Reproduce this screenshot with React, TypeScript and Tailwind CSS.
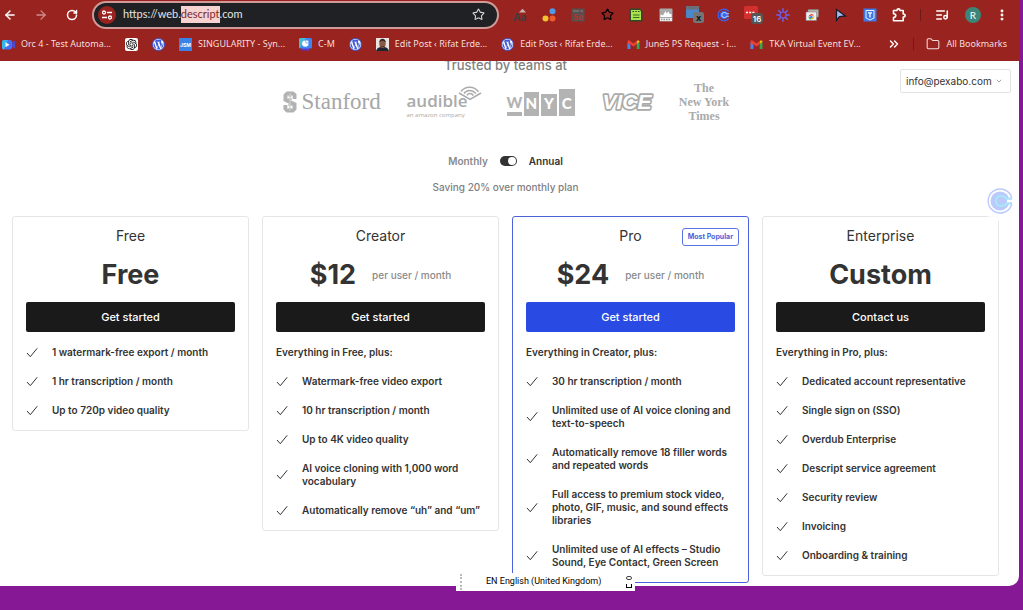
import React, { useEffect, useRef } from "react";
import {
  ArrowLeft,
  ArrowRight,
  ChevronDown,
  ChevronsRight,
  EllipsisVertical,
  Folder,
  ListMusic,
  RotateCw,
  Star,
} from "lucide-react";
import { SiOpenai, SiWordpress } from "react-icons/si";

const URL_TEXT = "https://web.descript.com";

/* ---------- small icons ---------- */

function CheckMark() {
  return (
    <svg viewBox="0 0 12 12" className="w-3 h-3 shrink-0" fill="none" stroke="#333" strokeWidth="1">
      <path d="M1 6 4.300 9.700 11.200 1.300" />
    </svg>
  );
}

function WordpressIcon() {
  return (
    <span className="w-[13px] h-[13px] shrink-0 rounded-full bg-[#3f5bd8] flex items-center justify-center">
      <SiWordpress className="w-[11px] h-[11px] text-white" />
    </span>
  );
}

function GmailIcon() {
  return (
    <svg viewBox="0 0 13 13" className="w-[13px] h-[13px] shrink-0">
      <path d="M12.500 3.500V11H9.700V5.600z" fill="#34a853" />
      <path d="M9.700 3.300 11 2.200q1.500 0 1.500 1.600L9.700 6z" fill="#fbbc04" />
      <path d="M.5 3.800q0-1.800 1.600-1.600L6.500 5.600l3.200-2.500V6L6.500 8.600 3.300 6v5H.9L.5 4z" fill="#ea4335" />
      <path d="M.5 5v6h2.800V7z" fill="#4285f4" />
    </svg>
  );
}

function CameraIcon() {
  return (
    <svg viewBox="0 0 13 13" className="w-[13px] h-[13px] shrink-0">
      <path d="M9 5 13 2.600v8L9 8.500z" fill="#5145c8" />
      <rect x="0" y="2" width="10" height="9.500" rx="2" fill="#4a6ff0" />
      <path d="M0 4q0-2 2-2h4L2 11.500Q0 11.500 0 9.500z" fill="#35b6e8" />
      <path d="M3.500 4.200v5l4-2.500z" fill="#fff" />
    </svg>
  );
}

function JsmIcon() {
  return (
    <svg viewBox="0 0 13 13" className="w-[13px] h-[13px] shrink-0">
      <rect width="13" height="13" fill="#3b82e6" />
      <text x="6.500" y="8.500" textAnchor="middle" fontSize="5" fontWeight="700" fontFamily="Inter, sans-serif" fill="#fff">
        JSM
      </text>
    </svg>
  );
}

function ChartBadgeIcon() {
  return (
    <svg viewBox="0 0 13 13" className="w-[13px] h-[13px] shrink-0">
      <path d="M4 9 2.500 12.700l2-.7L5.500 13 6.500 10 7.500 13l1.200-1 1.800.7L9 9z" fill="#5b3fe0" />
      <rect x="0" y="0" width="13" height="10.500" rx="1.500" fill="#3f86f0" />
      <path d="M0 1.500Q0 0 1.500 0H7L1 10Q0 9.800 0 9z" fill="#48b8d8" />
      <circle cx="6.300" cy="5.600" r="3.200" fill="#fff" />
      <path d="M6.800 5V1.800A3.200 3.200 0 0 1 10 5z" fill="#fff" stroke="#3f86f0" strokeWidth=".6" />
    </svg>
  );
}

function PortraitIcon() {
  return (
    <svg viewBox="0 0 13 13" className="w-[13px] h-[13px] shrink-0">
      <rect width="13" height="13" fill="#e9e4df" />
      <path d="M0 13q1-3.500 4.500-4h4q3.500.5 4.500 4z" fill="#1f2430" />
      <ellipse cx="6.500" cy="5.800" rx="3.200" ry="4.200" fill="#8a5a48" />
      <path d="M3.300 4.500Q3.500.8 6.500.8t3.200 3.700Q8 2.800 6.500 2.800T3.300 4.500z" fill="#3a2a26" />
      <path d="M5 8.200h3v.8H5z" fill="#4c2f28" />
    </svg>
  );
}

/* ---------- toolbar extensions ---------- */

const extensions: { name: string; icon: React.ReactNode }[] = [
  {
    name: "Fonts",
    icon: (
      <svg viewBox="0 0 14 14" className="w-3.5 h-3.5">
        <text x="0" y="12.500" fontSize="10" fontWeight="700" fontFamily="Inter, sans-serif" fill="#453c3c">
          Aa
        </text>
        <path d="M6 4.500 9.500.8 13 4.500z" fill="#c9b3b3" />
      </svg>
    ),
  },
  {
    name: "Dots",
    icon: (
      <svg viewBox="0 0 14 14" className="w-3.5 h-3.5">
        <circle cx="10.500" cy="3.300" r="3" fill="#4f9be8" />
        <circle cx="3.500" cy="10.500" r="3" fill="#f2c230" />
        <circle cx="10.500" cy="10.500" r="3" fill="#ef5a2c" />
      </svg>
    ),
  },
  {
    name: "Search engine",
    icon: (
      <svg viewBox="0 0 14 14" className="w-3.5 h-3.5">
        <rect x=".5" y=".5" width="13" height="13" fill="#57504f" />
        <path d="M2 3h6M9.500 3H12" stroke="#8d8583" strokeWidth="1" />
        <text x="2" y="12" fontSize="8" fontWeight="700" fontFamily="Inter, sans-serif" fill="#b8332d">
          5e
        </text>
      </svg>
    ),
  },
  {
    name: "Favourites",
    icon: <Star className="w-[13px] h-[13px] text-black" strokeWidth={2.2} />,
  },
  {
    name: "Notes",
    icon: (
      <svg viewBox="0 0 14 14" className="w-3.5 h-3.5">
        <path d="M1.500.5h9.500l2.500 2.500v10.500H.5V2q0-1.500 1-1.500z" fill="#2f4a2b" />
        <path d="M2 2h9l1 1.500V12H2z" fill="#a9e24c" />
        <path d="M3.500 3.500H5M6.300 3.500h1.500M9 3.500h1.500" stroke="#28451c" />
        <path d="M4 7h6.500M4 9.500h6.500" stroke="#3b6b25" strokeWidth="1.200" />
      </svg>
    ),
  },
  {
    name: "Thumbs",
    icon: (
      <svg viewBox="0 0 14 14" className="w-3.5 h-3.5">
        <rect x=".5" y=".5" width="13" height="13" rx="1" fill="#a9a9a9" />
        <path d="M1.500 9V6.500L4 7.500 6.500 3l1 2.500L9.500 3.500 10.500 6h2v3z" fill="#fff" />
        <path d="M1 11.500h12" stroke="#eee" strokeWidth="3" />
        <path d="M2 11.500h10" stroke="#999" strokeWidth="1.500" strokeDasharray="1.500 1" />
      </svg>
    ),
  },
  {
    name: "Window capture",
    icon: (
      <svg viewBox="0 0 18 17" className="w-[18px] h-[17px]">
        <rect x="0" y="0" width="13" height="12" rx="1" fill="#4a88c9" />
        <path d="M0 1.200Q0 0 1.200 0H12q1 0 1 1.200V3.500H0z" fill="#6b6f78" />
        <rect x="7" y="6" width="11" height="11" rx="2.500" fill="#757575" />
        <text x="12.500" y="14.500" textAnchor="middle" fontSize="9" fontWeight="700" fontFamily="Inter, sans-serif" fill="#111">
          x
        </text>
      </svg>
    ),
  },
  {
    name: "Calls",
    icon: (
      <svg viewBox="0 0 14 14" className="w-3.5 h-3.5" fill="none">
        <path d="M11.700 3.500A5.900 5.900 0 1 0 11.700 10.500" stroke="#3b63f0" strokeWidth="1.300" />
        <circle cx="7" cy="7" r="4.300" fill="#3b63f0" />
        <path d="M12 5.800H9.500A2.500 2.500 0 1 0 9.500 8.200H12" stroke="#a9d0ff" strokeWidth="1.100" />
      </svg>
    ),
  },
  {
    name: "Tasks",
    icon: (
      <svg viewBox="0 0 19 18" className="w-[19px] h-[18px]">
        <rect x="0" y="0" width="14" height="13" rx="1.500" fill="#d32f2f" />
        <path d="M2 6.500h9" stroke="#fff" strokeWidth="1.600" strokeDasharray="2 1.200" />
        <rect x="7" y="7" width="12" height="11" rx="3" fill="#555" />
        <text x="13" y="15.500" textAnchor="middle" fontSize="8" fontWeight="600" fontFamily="Inter, sans-serif" fill="#fff">
          16
        </text>
      </svg>
    ),
  },
  {
    name: "Burst",
    icon: (
      <svg viewBox="0 0 14 14" className="w-3.5 h-3.5" fill="none" stroke="#6a62f2" strokeWidth="1.500">
        <circle cx="7" cy="7" r="3" strokeWidth="1.200" />
        <path d="M7 .3v3.500M7 10.200v3.500M.3 7h3.500M10.200 7h3.500M2.300 2.300l2.500 2.500M9.200 9.200l2.500 2.500M11.700 2.300 9.200 4.800M4.800 9.200l-2.500 2.500" />
      </svg>
    ),
  },
  {
    name: "Screens",
    icon: (
      <svg viewBox="0 0 14 14" className="w-3.5 h-3.5">
        <path d="M3 1.500h10.500V9H3z" fill="#b9b3b0" stroke="#7d7573" strokeWidth=".6" />
        <path d="M1 4h10.500v8.500H1z" fill="#efefef" stroke="#8c8583" strokeWidth=".6" />
        <path d="M3.500 9a3 3 0 0 1 5.600-1.400H6z" fill="#ea4335" />
        <path d="M3.500 9q.3 2.500 2.700 2.500L7 9.500z" fill="#34a853" />
        <path d="M9.200 8q.5 3-2.800 3.500L7.500 9z" fill="#fbbc04" />
        <circle cx="6.300" cy="9" r="1.300" fill="#4285f4" />
      </svg>
    ),
  },
  {
    name: "Cursor",
    icon: (
      <svg viewBox="0 0 14 14" className="w-3.5 h-3.5">
        <path d="M2.500 1.500v11l3-3.800L11.500 8z" fill="#a3bdf0" stroke="#1b1b2c" strokeWidth="1.300" />
      </svg>
    ),
  },
  {
    name: "Text",
    icon: (
      <svg viewBox="0 0 14 14" className="w-3.5 h-3.5">
        <rect x=".5" y=".5" width="13" height="13" fill="#3c78e6" />
        <path d="M3 2.500h8v7.500L7 12 3 10z" fill="none" stroke="#fff" strokeWidth=".9" />
        <path d="M5 4.800h4M7 4.800V9.500" stroke="#fff" strokeWidth="1.300" />
      </svg>
    ),
  },
  {
    name: "Extensions",
    icon: (
      <svg viewBox="0 0 14 14" className="w-3.5 h-3.5" fill="none" stroke="#fff" strokeWidth="1.600" strokeLinejoin="round">
        <path d="M1.500 2.500H5Q5 .9 6.500.9T8 2.500h3.200V6q1.900 0 1.900 1.500T11.200 9v3.800H1.500V9.500Q3.800 9.300 3.800 7.600T1.500 5.700z" />
      </svg>
    ),
  },
];

/* ---------- bookmarks ---------- */

const bookmarks: { icon: React.ReactNode; label?: string; title: string }[] = [
  { icon: <CameraIcon />, label: "Orc 4 - Test Automa...", title: "Orc 4" },
  {
    icon: (
      <span className="w-[13px] h-[13px] shrink-0 rounded-xs bg-white flex items-center justify-center">
        <SiOpenai className="w-[11px] h-[11px] text-black" />
      </span>
    ),
    title: "ChatGPT",
  },
  { icon: <WordpressIcon />, title: "WordPress" },
  { icon: <JsmIcon />, label: "SINGULARITY - Syn...", title: "Singularity" },
  { icon: <ChartBadgeIcon />, label: "C-M", title: "C-M" },
  { icon: <WordpressIcon />, title: "WordPress" },
  { icon: <PortraitIcon />, label: "Edit Post ‹ Rifat Erde...", title: "Edit post" },
  { icon: <WordpressIcon />, label: "Edit Post ‹ Rifat Erde...", title: "Edit post" },
  { icon: <GmailIcon />, label: "June5 PS Request - i...", title: "June5" },
  { icon: <GmailIcon />, label: "TKA Virtual Event EV...", title: "TKA" },
];

function BrowserHeader() {
  const urlRef = useRef<HTMLInputElement>(null);

  useEffect(() => {
    const start = URL_TEXT.indexOf("descript");
    urlRef.current?.focus({ preventScroll: true });
    urlRef.current?.setSelectionRange(start, start + "descript".length);
  }, []);

  return (
    <header className="bg-[#99231f] text-white shrink-0">
      <div className="h-[29px] flex items-center pl-0.5 pr-2.5 font-[Lato,sans-serif]">
        <div className="flex items-center gap-[15px]">
          <button aria-label="Back">
            <ArrowLeft className="w-4 h-3.5" strokeWidth={2.5} />
          </button>
          <button aria-label="Forward" className="text-[#cf8d8a]">
            <ArrowRight className="w-4 h-3.5" strokeWidth={2.2} />
          </button>
          <button aria-label="Reload">
            <RotateCw className="w-4 h-3" strokeWidth={3} />
          </button>
        </div>
        <div className="flex-1 min-w-0 h-7 ml-3 mr-1.5 flex items-center rounded-full border-2 border-[#cf9b98] bg-[#202124] pl-0.5 pr-3">
          <button
            aria-label="Site information"
            className="w-[18px] h-[18px] ml-0.5 rounded-full bg-[#99231f] flex items-center justify-center"
          >
            <svg viewBox="0 0 12 12" className="w-3 h-3" fill="none" stroke="#fff" strokeWidth="1.300">
              <circle cx="3" cy="3.500" r="1.500" />
              <path d="M6 3.500h5M1 8.500h5" />
              <circle cx="9" cy="8.500" r="1.500" />
            </svg>
          </button>
          <input
            ref={urlRef}
            aria-label="Address"
            defaultValue={URL_TEXT}
            spellCheck={false}
            className="flex-1 min-w-0 ml-[7px] text-[11px] text-[#e3e3e3] bg-transparent outline-none selection:bg-[#f6d3d0] selection:text-[#7a2a27]"
          />
          <button aria-label="Bookmark this page">
            <Star className="w-[13px] h-[13px] text-[#d8d8d8]" strokeWidth={2} />
          </button>
        </div>
        <div className="w-[409px] shrink-0 grid grid-cols-14">
          {extensions.map((ext) => (
            <button key={ext.name} aria-label={ext.name} className="h-6 flex items-center justify-center">
              {ext.icon}
            </button>
          ))}
        </div>
        <div className="flex items-center">
          <span className="w-px h-3 ml-1.5 bg-[#6d1916]" />
          <button aria-label="Media" className="ml-3.5">
            <ListMusic className="w-3.5 h-3.5" strokeWidth={2.5} />
          </button>
          <button
            aria-label="Profile"
            className="w-4 h-4 ml-4 rounded-full bg-[#3d8577] text-[10px] leading-4 text-center"
          >
            R
          </button>
          <button aria-label="Menu" className="ml-3.5">
            <EllipsisVertical className="w-3.5 h-3.5" strokeWidth={3} />
          </button>
        </div>
      </div>

      <nav className="h-8 flex items-center pl-0.5 pr-3 pb-0.5 font-['Noto_Sans',sans-serif] text-[9px] text-[#f3dedd]">
        <div className="flex items-center gap-3.5">
          {bookmarks.map((item, index) => (
            <a key={index} href="#" title={item.title} className="flex items-center gap-1.5 whitespace-nowrap">
              {item.icon}
              {item.label && <span>{item.label}</span>}
            </a>
          ))}
        </div>
        <button aria-label="More bookmarks" className="ml-auto">
          <ChevronsRight className="w-3.5 h-3.5 text-white" strokeWidth={2.5} />
        </button>
        <span className="w-px h-3 mx-3 bg-[#6d1916]" />
        <a href="#" className="flex items-center gap-1.5 whitespace-nowrap">
          <Folder className="w-3.5 h-3.5" strokeWidth={1.8} />
          All Bookmarks
        </a>
      </nav>
    </header>
  );
}

/* ---------- customer logos ---------- */

function StanfordLogo() {
  return (
    <div className="w-[98px] flex items-center gap-[5px] font-['Liberation_Serif',serif] text-[23px] leading-6 text-[#a6a6a6]">
      <svg viewBox="0 0 14 22" className="w-3.5 h-[22px] shrink-0">
        <path
          d="M3.500.5h7L13.500 3v5H9.700V4.500H4.500v3.200l9 4.300v6.500l-3 3h-7l-3-3V14h3.800v3.700h5.200v-3.200L.5 10V3.500z"
          fill="#b2b2b2"
        />
        <path d="M7 1v20M5.500 5h3M5 8h4M5 14h4M5.500 18h3" stroke="#a3a3a3" strokeWidth="1" />
        <path d="M7 2v18" stroke="#fff" strokeWidth=".6" />
      </svg>
      Stanford
    </div>
  );
}

function AudibleLogo() {
  return (
    <div className="w-[74px] h-8 flex font-['Open_Sans',sans-serif] text-[#aaa]">
      <div className="flex flex-col pt-[5px]">
        <span className="text-[17px] leading-5 font-semibold">audible</span>
        <span className="text-[6px] leading-2 whitespace-nowrap">an amazon company</span>
      </div>
      <svg viewBox="0 0 26 15" className="w-[26px] h-[15px] -ml-3 shrink-0" fill="none" stroke="#aaa" strokeWidth="1.500">
        <path d="M3 7 14 13.500 25 7" />
        <path d="M5 5.500Q8 1.300 13.500 1.200t9 4.500M8 7.500Q10 4.500 13.500 4.400t6.500 3M11 9.300Q12 7.500 14 7.500t3.500 2" />
      </svg>
    </div>
  );
}

function WnycLogo() {
  return (
    <div className="w-[68px] h-7 flex items-end gap-0.5 font-[Lato,sans-serif] font-black text-[15px] leading-4 text-center">
      <span className="w-[15px] h-[22px] border-b-4 border-[#b3b3b3] text-[#b3b3b3]">W</span>
      <span className="w-4 h-6 pt-[3px] bg-[#b3b3b3] text-white">N</span>
      <span className="w-4 h-[22px] pt-px bg-[#b3b3b3] text-white">Y</span>
      <span className="w-4 h-[27px] pt-1.5 bg-[#b3b3b3] text-white">C</span>
    </div>
  );
}

function ViceLogo() {
  return (
    <svg viewBox="0 0 53 20" className="w-[53px] h-5">
      <text
        x="26"
        y="17"
        textAnchor="middle"
        fontSize="21"
        fontWeight="700"
        fontStyle="italic"
        fontFamily="Liberation Sans, sans-serif"
        fill="#fff"
        stroke="#aaa"
        strokeWidth="3.400"
        strokeLinejoin="round"
        paintOrder="stroke"
      >
        VICE
      </text>
    </svg>
  );
}

function NytLogo() {
  return (
    <div className="w-[49px] flex flex-col items-center whitespace-nowrap font-['Liberation_Serif',serif] font-bold text-[12px] leading-[14px] text-[#aaa]">
      <span>The</span>
      <span>New York</span>
      <span>Times</span>
    </div>
  );
}

/* ---------- pricing ---------- */

type Plan = {
  name: string;
  price: string;
  unit?: string;
  cta: string;
  intro?: string;
  popular?: boolean;
  features: string[];
};

const plans: Plan[] = [
  {
    name: "Free",
    price: "Free",
    cta: "Get started",
    features: ["1 watermark-free export / month", "1 hr transcription / month", "Up to 720p video quality"],
  },
  {
    name: "Creator",
    price: "$12",
    unit: "per user / month",
    cta: "Get started",
    intro: "Everything in Free, plus:",
    features: [
      "Watermark-free video export",
      "10 hr transcription / month",
      "Up to 4K video quality",
      "AI voice cloning with 1,000 word vocabulary",
      "Automatically remove “uh” and “um”",
    ],
  },
  {
    name: "Pro",
    price: "$24",
    unit: "per user / month",
    cta: "Get started",
    intro: "Everything in Creator, plus:",
    popular: true,
    features: [
      "30 hr transcription / month",
      "Unlimited use of AI voice cloning and text-to-speech",
      "Automatically remove 18 filler words and repeated words",
      "Full access to premium stock video, photo, GIF, music, and sound effects libraries",
      "Unlimited use of AI effects – Studio Sound, Eye Contact, Green Screen",
    ],
  },
  {
    name: "Enterprise",
    price: "Custom",
    cta: "Contact us",
    intro: "Everything in Pro, plus:",
    features: [
      "Dedicated account representative",
      "Single sign on (SSO)",
      "Overdub Enterprise",
      "Descript service agreement",
      "Security review",
      "Invoicing",
      "Onboarding & training",
    ],
  },
];

function PlanCard({ plan }: { plan: Plan }) {
  return (
    <section
      className={`relative rounded-[3px] border px-[13px] pt-[11px] pb-[13px] text-[#333] ${
        plan.popular ? "border-[#4a63dc]" : "border-[#e6e6e6]"
      }`}
    >
      <h2 className="text-[14px] leading-4 text-center">{plan.name}</h2>
      {plan.popular && (
        <span className="absolute top-[11px] right-[9px] h-[18px] px-[5px] rounded-[3px] border border-[#5a72e4] text-[7px] leading-4 font-bold text-[#4a63dc]">
          Most Popular
        </span>
      )}
      <div className="h-8 mt-[15px] flex items-center justify-center gap-4">
        <span className="text-[27px] leading-8 font-bold">{plan.price}</span>
        {plan.unit && <span className="text-[10px] font-medium text-[#8a8a8a]">{plan.unit}</span>}
      </div>
      <button
        className={`w-full h-[30px] mt-[11px] rounded-xs text-[11px] font-medium text-white ${
          plan.popular ? "bg-[#294be4]" : "bg-[#1a1a1a]"
        }`}
      >
        {plan.cta}
      </button>
      <div className="mt-3.5 flex flex-col gap-4 text-[10px] leading-[13px] font-semibold">
        {plan.intro && <p>{plan.intro}</p>}
        <ul className="flex flex-col gap-4">
          {plan.features.map((feature) => (
            <li key={feature} className="flex items-center gap-3.5">
              <CheckMark />
              <span>{feature}</span>
            </li>
          ))}
        </ul>
      </div>
    </section>
  );
}

function PricingPage() {
  return (
    <main className="relative flex-1 min-h-0 overflow-hidden rounded-br-[10px] bg-white pl-3 pr-5">
      <h1 className="-mt-1 text-[13px] leading-4 font-medium text-center text-[#808080]">Trusted by teams at</h1>
      <div className="h-[50px] mt-1 flex items-center justify-center gap-[26px]">
        <StanfordLogo />
        <AudibleLogo />
        <WnycLogo />
        <ViceLogo />
        <NytLogo />
      </div>

      <label className="h-4 mt-[26px] flex items-center justify-center gap-3 text-[10px] font-semibold">
        <span className="text-[#8a8a8a]">Monthly</span>
        <input
          type="checkbox"
          role="switch"
          defaultChecked
          aria-label="Annual billing"
          className="appearance-none w-[17px] h-[10px] rounded-full bg-[#333] flex items-center justify-end pr-px before:w-2 before:h-2 before:rounded-full before:bg-white"
        />
        <span className="text-[#333]">Annual</span>
      </label>
      <p className="mt-2.5 text-[10px] leading-4 font-medium text-center text-[#808080]">Saving 20% over monthly plan</p>

      <div className="mt-[21px] grid grid-cols-4 items-start gap-[13px]">
        {plans.map((plan) => (
          <PlanCard key={plan.name} plan={plan} />
        ))}
      </div>

      {/* account picker */}
      <div className="absolute top-2 right-2 w-[111px] h-6 flex">
        <select
          aria-label="Account"
          className="appearance-none w-full h-full rounded-xs border border-[#e3e3e3] bg-white pl-[5px] text-[10px] text-[#333]"
        >
          <option>info@pexabo.com</option>
        </select>
        <ChevronDown className="absolute top-2 right-2 w-2 h-2 text-[#777] pointer-events-none" strokeWidth={2} />
      </div>

      {/* floating widget */}
      <button
        aria-label="Open scheduler"
        className="absolute top-[120px] right-0 w-[38px] h-10 pl-1.5 flex items-center rounded-l-full bg-white/80"
      >
        <svg viewBox="0 0 26 26" className="w-[26px] h-[26px] shrink-0" fill="none">
          <path d="M24.800 10A12 12 0 1 0 24.800 16" stroke="#bccafb" strokeWidth="1.400" />
          <circle cx="13" cy="13" r="9.500" fill="#bccafb" />
          <path
            d="M25 9.500 20 11q-2.500-3-6-3-5 0-5 5t5 5q3.500 0 6-3l5 1.500"
            fill="#bccafb"
            stroke="#a4ecf6"
            strokeWidth="1.600"
          />
          <path d="M26 11.800h-6v2.400h6z" fill="#fff" />
        </svg>
      </button>
    </main>
  );
}

function LanguageBar() {
  return (
    <div className="absolute bottom-[19px] left-[456px] w-[179px] h-[18px] flex items-center bg-white pl-1 pr-0.5 text-black">
      <span className="h-4 border-l-2 border-dotted border-[#bbb]" />
      <span className="ml-6 flex-1 whitespace-nowrap font-[Roboto,sans-serif] text-[9px]">
        EN English (United Kingdom)
      </span>
      <button aria-label="Language options" className="w-2 flex flex-col items-center gap-1">
        <span className="w-1.5 h-1 rounded-xs border border-[#444]" />
        <span className="w-1.5 h-1 border border-t-0 border-black" />
      </button>
    </div>
  );
}

export default function App() {
  return (
    <div className="relative h-screen flex flex-col overflow-hidden bg-[#861896] pr-1 pb-6 font-[Inter,sans-serif]">
      <BrowserHeader />
      <PricingPage />
      <LanguageBar />
    </div>
  );
}
